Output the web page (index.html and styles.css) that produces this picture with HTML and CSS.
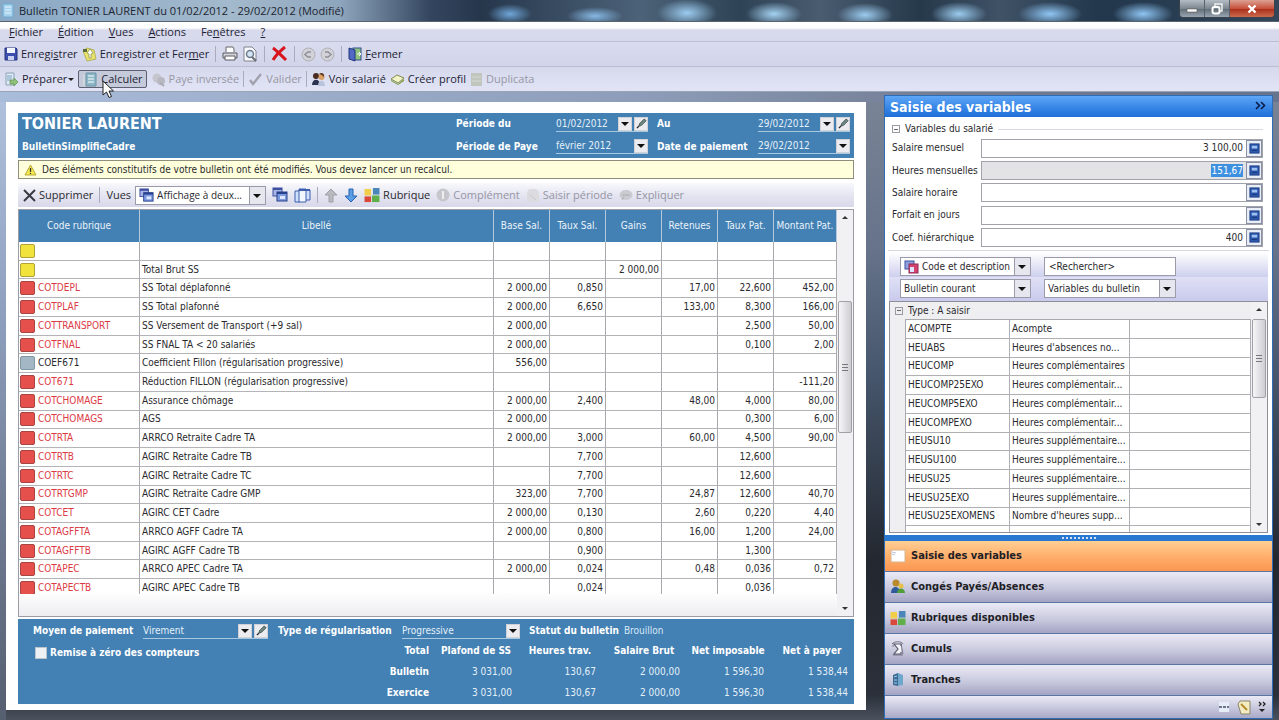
FILE: index.html
```html
<!DOCTYPE html>
<html lang="fr">
<head>
<meta charset="UTF-8">
<meta name="viewport" content="width=device-width, initial-scale=1.0">
<title>Bulletin TONIER LAURENT</title>
<link rel="stylesheet" href="styles.css">
</head>
<body>

<!-- shared icons -->
<svg class="sprite" width="0" height="0">
  <symbol id="i-calc" viewBox="0 0 12 12">
    <rect x="1" y="1" width="10" height="10" fill="#2c58ae" stroke="#1c3c84"/>
    <rect x="3" y="3" width="6" height="3" fill="#9fc1f2"/>
    <path d="M3 8h6" stroke="#16336f"/>
  </symbol>
  <symbol id="i-pencil" viewBox="0 0 12 12">
    <path d="M3 9l1-3 5-5 2 2-5 5z" fill="#6f8a80" stroke="#2c3a3a" stroke-width=".8"/>
    <path d="M1 11l2-2" stroke="#222" stroke-width="1.4"/>
  </symbol>
  <symbol id="i-windows" viewBox="0 0 16 16">
    <rect x="1" y="1" width="9" height="8" fill="#a9b6e8" stroke="#3f4f9f"/>
    <path d="M1 2h9" stroke="#3f4f9f" stroke-width="2"/>
    <rect x="5" y="5" width="10" height="9" fill="#7d9ae0" stroke="#27408c"/>
    <path d="M5 6h10" stroke="#27408c" stroke-width="2"/>
    <rect x="8" y="9" width="5" height="3" fill="#dfe8ff"/>
  </symbol>
  <symbol id="i-rubrique" viewBox="0 0 16 16">
    <rect x="0" y="1" width="7" height="7" fill="#f2cf4a"/>
    <rect x="9" y="0" width="7" height="7" fill="#4a86b8"/>
    <rect x="0" y="9" width="7" height="6" fill="#d9483b"/>
    <rect x="8" y="8" width="8" height="7" fill="#5fb04c"/>
  </symbol>
</svg>

<header class="titlebar">
  <svg width="14" height="16" viewBox="0 0 14 16"><rect x="1" y="1" width="10" height="13" rx="1" fill="#a5d2ee" stroke="#6fa9cf"/><path d="M3 4h6M3 7h6M3 10h6" stroke="#e9f6ff"/></svg>
  <h1>Bulletin TONIER LAURENT du 01/02/2012 - 29/02/2012 (Modifié)</h1>
  <div class="window-buttons">
    <button aria-label="Réduire"><svg width="12" height="10" viewBox="0 0 12 10"><rect x="1" y="5" width="10" height="3" fill="#fff" stroke="#555" stroke-width=".6"/></svg></button>
    <button aria-label="Restaurer"><svg width="12" height="12" viewBox="0 0 12 12"><path d="M4 3V1h7v7H9" fill="none" stroke="#eee" stroke-width="1.5"/><rect x="1.500" y="4" width="7" height="6.500" rx="2" fill="none" stroke="#fff" stroke-width="2"/></svg></button>
    <button class="close" aria-label="Fermer la fenêtre"><svg width="10" height="10" viewBox="0 0 10 10"><path d="M1.500 1.500l7 7M8.500 1.500l-7 7" stroke="#fff" stroke-width="2.400"/></svg></button>
  </div>
</header>

<nav class="menubar">
  <button><u>F</u>ichier</button>
  <button><u>É</u>dition</button>
  <button><u>V</u>ues</button>
  <button><u>A</u>ctions</button>
  <button>Fe<u>n</u>êtres</button>
  <button><u>?</u></button>
</nav>

<div class="toolbar toolbar-main">
  <button><svg width="14" height="14" viewBox="0 0 14 14"><path d="M1 1h11l1 1v11H1z" fill="#3c4fae" stroke="#25337c"/><rect x="3" y="1" width="8" height="5" fill="#f3f5ff"/><rect x="4" y="9" width="6" height="4" fill="#c9d1ee"/></svg><span>Enregi<u>s</u>trer</span></button>
  <button><svg width="15" height="15" viewBox="0 0 15 15"><path d="M1 4l4-3 7 2 2 9-9 2z" fill="#e9e36d" stroke="#b6b457"/><path d="M5 6l3-4 3 4-2 1v4H7V7z" fill="#fff" stroke="#7d8a4a" stroke-width=".7"/><path d="M1 2h4v3H1z" fill="#5c6a3a"/></svg><span>Enregistrer et Fer<u>m</u>er</span></button>
  <i class="sep"></i>
  <button aria-label="Imprimer"><svg width="16" height="16" viewBox="0 0 16 16"><path d="M4 6V1h7l1 2v3" fill="#fff" stroke="#666"/><path d="M1 7h14v5H1z" fill="#d5d5da" stroke="#5b5b63"/><path d="M3 10h10v4H3z" fill="#fff" stroke="#5b5b63"/></svg></button>
  <button aria-label="Aperçu"><svg width="16" height="16" viewBox="0 0 16 16"><path d="M2 1h8l4 4v10H2z" fill="#fbfbff" stroke="#82828e"/><circle cx="8" cy="8" r="3.500" fill="#d3e4f2" stroke="#6d7d8e" stroke-width="1.500"/><path d="M10 11l4 4" stroke="#6d6d78" stroke-width="2"/></svg></button>
  <i class="sep"></i>
  <button aria-label="Supprimer le bulletin"><svg width="17" height="16" viewBox="0 0 17 16"><path d="M2 2c4 3 8 7 13 12M14 1C9 5 5 9 2 14" fill="none" stroke="#d8141c" stroke-width="3"/></svg></button>
  <i class="sep"></i>
  <button disabled aria-label="Précédent"><svg width="15" height="15" viewBox="0 0 15 15"><circle cx="7.500" cy="7.500" r="6.500" fill="#d2d2d8" stroke="#b0b0b8"/><path d="M10 5H7L4 7.500 7 10h3" fill="none" stroke="#8e8e98" stroke-width="1.500"/></svg></button>
  <button disabled aria-label="Suivant"><svg width="15" height="15" viewBox="0 0 15 15"><circle cx="7.500" cy="7.500" r="6.500" fill="#d2d2d8" stroke="#b0b0b8"/><path d="M5 5h3l3 2.500L8 10H5" fill="none" stroke="#8e8e98" stroke-width="1.500"/></svg></button>
  <i class="sep"></i>
  <button><svg width="14" height="15" viewBox="0 0 14 15"><rect x="5" y="1" width="8" height="12" fill="#8fc27d" stroke="#2f4f8f"/><path d="M1 1l6 2v11l-6-2z" fill="#5169c4" stroke="#24357f"/><path d="M9 7h4l-2-2M13 7l-2 2" stroke="#fff" fill="none"/></svg><span><u>F</u>ermer</span></button>
</div>

<div class="toolbar toolbar-actions">
  <button><svg width="15" height="15" viewBox="0 0 15 15"><path d="M2 1h8v12H2z" fill="#dfe9f3" stroke="#8aa2b4"/><path d="M3 4h5M3 6h5M3 8h4" stroke="#7fa4c4"/><path d="M6 8h4V6l4 4-4 4v-2H6z" fill="#8fc17a" stroke="#5d9350" stroke-width=".7"/></svg>Préparer<span class="caret"></span></button>
  <button class="pressed"><svg width="16" height="15" viewBox="0 0 16 15"><path d="M1 3l2-1v12l-2-1z" fill="#cfd6de"/><path d="M4 1h10v13H4z" fill="#8fb6c6" stroke="#6b94a8"/><path d="M6 4h6M6 7h6M6 10h6" stroke="#d6eaf0" stroke-width="1.500"/></svg>Calculer</button>
  <button disabled><svg width="15" height="15" viewBox="0 0 15 15"><circle cx="6" cy="6" r="4.500" fill="#c5c5ce"/><circle cx="10" cy="9" r="4" fill="#b8b8c2"/><path d="M9 11l4 3" stroke="#aaaab4" stroke-width="2"/></svg>Paye inversée</button>
  <i class="sep"></i>
  <button disabled><svg width="15" height="14" viewBox="0 0 15 14"><path d="M2 8l3 4 8-10" fill="none" stroke="#a2a2ae" stroke-width="2.400"/></svg>Valider</button>
  <i class="sep"></i>
  <button><svg width="15" height="15" viewBox="0 0 15 15"><circle cx="5" cy="4" r="3" fill="#4b2a20"/><path d="M1 13c0-7 8-7 8 0z" fill="#2b3350"/><circle cx="10.500" cy="5" r="3" fill="#d9a066"/><path d="M8 2c2-2 6-1 5 3l-2-2z" fill="#5c3418"/><path d="M7 14c0-7 7-7 7 0z" fill="#b9c4dc"/></svg>Voir salarié</button>
  <button><svg width="15" height="13" viewBox="0 0 15 13"><path d="M1 6l6-4 7 3-6 5z" fill="#f2f3c8" stroke="#7f8a4c"/><path d="M1 7l7 4 6-5v2l-6 4-7-4z" fill="#7f9a42"/></svg>Créer profil</button>
  <button disabled><svg width="13" height="15" viewBox="0 0 13 15"><rect x="1" y="1" width="11" height="13" fill="#c0c6be"/><path d="M2 5h9M2 9h9" stroke="#d4dad2"/></svg>Duplicata</button>
</div>

<svg class="cursor" width="12" height="19" viewBox="0 0 12 19"><path d="M1 1v14l3.500-3 2.500 5.500 2.500-1L7 11h4.500z" fill="#fff" stroke="#222"/></svg>

<div class="workspace">
  <main class="bulletin">
    <section class="employee">
      <div>
        <h2>TONIER LAURENT</h2>
        <p>BulletinSimplifieCadre</p>
      </div>
      <div class="dates">
        <label for="du">Période du</label>
        <span class="field"><input id="du" value="01/02/2012"><button class="drop" aria-label="Choisir"></button><button class="edit" aria-label="Modifier"><svg width="11" height="11"><use href="#i-pencil"/></svg></button></span>
        <label for="au">Au</label>
        <span class="field"><input id="au" value="29/02/2012"><button class="drop" aria-label="Choisir"></button><button class="edit" aria-label="Modifier"><svg width="11" height="11"><use href="#i-pencil"/></svg></button></span>
        <label for="paye">Période de Paye</label>
        <span class="field"><input id="paye" value="février 2012"><button class="drop" aria-label="Choisir"></button></span>
        <label for="paiement">Date de paiement</label>
        <span class="field"><input id="paiement" value="29/02/2012"><button class="drop" aria-label="Choisir"></button></span>
      </div>
    </section>

    <p class="warning"><svg width="13" height="12" viewBox="0 0 13 12"><path d="M6.500 1L12 11H1z" fill="#f5e94c" stroke="#b8a93a"/><path d="M6.500 4v4M6.500 9v1" stroke="#333" stroke-width="1.300"/></svg>Des éléments constitutifs de votre bulletin ont été modifiés. Vous devez lancer un recalcul.</p>

    <div class="gridbar">
      <button><svg width="13" height="13" viewBox="0 0 13 13"><path d="M1 1l11 11M12 1L1 12" stroke="#3a3a44" stroke-width="2"/></svg>Supprimer</button>
      <i class="sep"></i>
      <label for="vue">Vues</label>
      <span class="combo combo-icon combo-view"><svg width="15" height="15"><use href="#i-windows"/></svg><select id="vue"><option>Affichage à deux...</option></select></span>
      <button aria-label="Fenêtres"><svg width="16" height="16"><use href="#i-windows"/></svg></button>
      <button aria-label="Colonnes"><svg width="17" height="15" viewBox="0 0 17 15"><path d="M1 3h5v11H1zM11 2h5v10h-5z" fill="#cfe0fa" stroke="#3f5fae"/><path d="M5 1h7v13H5z" fill="#f2f7ff" stroke="#3f5fae"/><path d="M5 2h11" stroke="#3f5fae" stroke-width="2"/></svg></button>
      <i class="sep"></i>
      <button disabled aria-label="Monter"><svg width="14" height="15" viewBox="0 0 14 15"><path d="M7 1l6 6H9v7H5V7H1z" fill="#b9b9c0" stroke="#a0a0a8"/></svg></button>
      <button aria-label="Descendre"><svg width="14" height="15" viewBox="0 0 14 15"><path d="M7 14L1 8h4V1h4v7h4z" fill="#5a9fe6" stroke="#2763b0"/></svg></button>
      <button><svg width="16" height="15"><use href="#i-rubrique"/></svg>Rubrique</button>
      <button disabled><svg width="14" height="14" viewBox="0 0 14 14"><circle cx="7" cy="7" r="6.500" fill="#c6c6cc"/><path d="M7 3v8" stroke="#eee" stroke-width="2"/></svg>Complément</button>
      <button disabled><svg width="14" height="15" viewBox="0 0 14 15"><path d="M3 1h7l3 3v10H1V4z" fill="#dcdce0"/><path d="M4 7l6 5" stroke="#c8c8d0"/></svg>Saisir période</button>
      <button disabled><svg width="14" height="13" viewBox="0 0 14 13"><ellipse cx="7" cy="6" rx="6.500" ry="5" fill="#cacad0"/><path d="M3 11l2-3M3 6h8" stroke="#aeaeb6"/></svg>Expliquer</button>
    </div>

    <div class="grid">
      <div class="grid-body">
        <div class="rows">
          <table class="rubriques">
            <colgroup><col class="c-code"><col><col class="c-num"><col class="c-num"><col class="c-num"><col class="c-num"><col class="c-num"><col class="c-last"></colgroup>
            <thead>
              <tr><th>Code rubrique</th><th>Libellé</th><th>Base Sal.</th><th>Taux Sal.</th><th>Gains</th><th>Retenues</th><th>Taux Pat.</th><th>Montant Pat.</th></tr>
            </thead>
            <tbody>
              <tr class="yellow"><td></td><td></td><td></td><td></td><td></td><td></td><td></td><td></td></tr>
              <tr class="yellow"><td></td><td>Total Brut SS</td><td></td><td></td><td>2 000,00</td><td></td><td></td><td></td></tr>
              <tr><td>COTDEPL</td><td>SS Total déplafonné</td><td>2 000,00</td><td>0,850</td><td></td><td>17,00</td><td>22,600</td><td>452,00</td></tr>
              <tr><td>COTPLAF</td><td>SS Total plafonné</td><td>2 000,00</td><td>6,650</td><td></td><td>133,00</td><td>8,300</td><td>166,00</td></tr>
              <tr><td>COTTRANSPORT</td><td>SS Versement de Transport (+9 sal)</td><td>2 000,00</td><td></td><td></td><td></td><td>2,500</td><td>50,00</td></tr>
              <tr><td>COTFNAL</td><td>SS FNAL TA &lt; 20 salariés</td><td>2 000,00</td><td></td><td></td><td></td><td>0,100</td><td>2,00</td></tr>
              <tr class="gray"><td>COEF671</td><td>Coefficient Fillon (régularisation progressive)</td><td>556,00</td><td></td><td></td><td></td><td></td><td></td></tr>
              <tr><td>COT671</td><td>Réduction FILLON (régularisation progressive)</td><td></td><td></td><td></td><td></td><td></td><td>-111,20</td></tr>
              <tr><td>COTCHOMAGE</td><td>Assurance chômage</td><td>2 000,00</td><td>2,400</td><td></td><td>48,00</td><td>4,000</td><td>80,00</td></tr>
              <tr><td>COTCHOMAGS</td><td>AGS</td><td>2 000,00</td><td></td><td></td><td></td><td>0,300</td><td>6,00</td></tr>
              <tr><td>COTRTA</td><td>ARRCO Retraite Cadre TA</td><td>2 000,00</td><td>3,000</td><td></td><td>60,00</td><td>4,500</td><td>90,00</td></tr>
              <tr><td>COTRTB</td><td>AGIRC Retraite Cadre TB</td><td></td><td>7,700</td><td></td><td></td><td>12,600</td><td></td></tr>
              <tr><td>COTRTC</td><td>AGIRC Retraite Cadre TC</td><td></td><td>7,700</td><td></td><td></td><td>12,600</td><td></td></tr>
              <tr><td>COTRTGMP</td><td>AGIRC Retraite Cadre GMP</td><td>323,00</td><td>7,700</td><td></td><td>24,87</td><td>12,600</td><td>40,70</td></tr>
              <tr><td>COTCET</td><td>AGIRC CET Cadre</td><td>2 000,00</td><td>0,130</td><td></td><td>2,60</td><td>0,220</td><td>4,40</td></tr>
              <tr><td>COTAGFFTA</td><td>ARRCO AGFF Cadre TA</td><td>2 000,00</td><td>0,800</td><td></td><td>16,00</td><td>1,200</td><td>24,00</td></tr>
              <tr><td>COTAGFFTB</td><td>AGIRC AGFF Cadre TB</td><td></td><td>0,900</td><td></td><td></td><td>1,300</td><td></td></tr>
              <tr><td>COTAPEC</td><td>ARRCO APEC Cadre TA</td><td>2 000,00</td><td>0,024</td><td></td><td>0,48</td><td>0,036</td><td>0,72</td></tr>
              <tr><td>COTAPECTB</td><td>AGIRC APEC Cadre TB</td><td></td><td>0,024</td><td></td><td></td><td>0,036</td><td></td></tr>
            </tbody>
          </table>
        </div>
      </div>
      <div class="scrollbar scroll-main"><i class="up"></i><i class="thumb"></i><i class="down"></i></div>
    </div>

    <footer class="summary">
      <div class="options">
        <label for="moyen">Moyen de paiement</label>
        <span class="field f-moyen"><input id="moyen" value="Virement"><button class="drop" aria-label="Choisir"></button><button class="edit" aria-label="Modifier"><svg width="11" height="11"><use href="#i-pencil"/></svg></button></span>
        <label for="regul">Type de régularisation</label>
        <span class="field f-regul"><input id="regul" value="Progressive"><button class="drop" aria-label="Choisir"></button></span>
        <b>Statut du bulletin</b>
        <span class="status">Brouillon</span>
      </div>
      <div class="totals-row">
        <label class="reset"><input type="checkbox">Remise à zéro des compteurs</label>
        <table class="totals">
          <tr><th>Total</th><th>Plafond de SS</th><th>Heures trav.</th><th>Salaire Brut</th><th>Net imposable</th><th>Net à payer</th></tr>
          <tr><th>Bulletin</th><td>3 031,00</td><td>130,67</td><td>2 000,00</td><td>1 596,30</td><td>1 538,44</td></tr>
          <tr><th>Exercice</th><td>3 031,00</td><td>130,67</td><td>2 000,00</td><td>1 596,30</td><td>1 538,44</td></tr>
        </table>
      </div>
    </footer>
  </main>

  <aside class="panel">
    <header class="panel-head">
      <h2>Saisie des variables</h2>
      <button aria-label="Replier"><svg width="11" height="9" viewBox="0 0 11 9"><path d="M1 1l3.500 3.500L1 8M6 1l3.500 3.500L6 8" fill="none" stroke="#0b1d4a" stroke-width="1.600"/></svg></button>
    </header>

    <section class="employee-vars">
      <h3><i class="minus"></i>Variables du salarié</h3>
      <div class="var-list">
        <label for="v1">Salaire mensuel</label><span class="var"><input id="v1" value="3 100,00"><button aria-label="Calculatrice"><svg width="11" height="11"><use href="#i-calc"/></svg></button></span>
        <label for="v2">Heures mensuelles</label><span class="var active"><span class="box"><input id="v2" value="151,67"></span><button aria-label="Calculatrice"><svg width="11" height="11"><use href="#i-calc"/></svg></button></span>
        <label for="v3">Salaire horaire</label><span class="var"><input id="v3"><button aria-label="Calculatrice"><svg width="11" height="11"><use href="#i-calc"/></svg></button></span>
        <label for="v4">Forfait en jours</label><span class="var"><input id="v4"><button aria-label="Calculatrice"><svg width="11" height="11"><use href="#i-calc"/></svg></button></span>
        <label for="v5">Coef. hiérarchique</label><span class="var"><input id="v5" value="400"><button aria-label="Calculatrice"><svg width="11" height="11"><use href="#i-calc"/></svg></button></span>
      </div>
    </section>

    <div class="filters">
      <span class="combo combo-icon"><svg width="15" height="14" viewBox="0 0 15 14"><rect x="1" y="1" width="9" height="8" fill="#8ea2e0" stroke="#3f4f9f"/><rect x="5" y="4" width="9" height="9" fill="#d6446c" stroke="#8a2a5c"/><rect x="6" y="7" width="4" height="5" fill="#dfe4ff"/></svg><select aria-label="Affichage"><option>Code et description</option></select></span>
      <input class="search" aria-label="Rechercher" value="&lt;Rechercher&gt;">
      <span class="combo"><select aria-label="Portée"><option>Bulletin courant</option></select></span>
      <span class="combo"><select aria-label="Source"><option>Variables du bulletin</option></select></span>
    </div>

    <div class="var-grid">
      <div class="var-grid-body">
        <h3><i class="minus"></i>Type : A saisir</h3>
        <div class="var-rows">
          <table>
            <colgroup><col class="v-code"><col class="v-name"><col></colgroup>
            <tr><td>ACOMPTE</td><td>Acompte</td><td></td></tr>
            <tr><td>HEUABS</td><td>Heures d'absences no...</td><td></td></tr>
            <tr><td>HEUCOMP</td><td>Heures complémentaires</td><td></td></tr>
            <tr><td>HEUCOMP25EXO</td><td>Heures complémentair...</td><td></td></tr>
            <tr><td>HEUCOMP5EXO</td><td>Heures complémentair...</td><td></td></tr>
            <tr><td>HEUCOMPEXO</td><td>Heures complémentair...</td><td></td></tr>
            <tr><td>HEUSU10</td><td>Heures supplémentaire...</td><td></td></tr>
            <tr><td>HEUSU100</td><td>Heures supplémentaire...</td><td></td></tr>
            <tr><td>HEUSU25</td><td>Heures supplémentaire...</td><td></td></tr>
            <tr><td>HEUSU25EXO</td><td>Heures supplémentaire...</td><td></td></tr>
            <tr><td>HEUSU25EXOMENS</td><td>Nombre d'heures supp...</td><td></td></tr>
            <tr><td></td><td></td><td></td></tr>
          </table>
        </div>
      </div>
      <div class="scrollbar scroll-side"><i class="up"></i><i class="thumb"></i><i class="down"></i></div>
    </div>

    <div class="splitter"><i></i></div>

    <nav class="outlook">
      <button class="current"><svg width="16" height="15" viewBox="0 0 16 15"><rect x="1" y="1" width="14" height="12" fill="#fff" stroke="#d9b48c"/><path d="M2 3l4 1M2 5l3 1" stroke="#b9c4dc"/></svg>Saisie des variables</button>
      <button><svg width="16" height="16" viewBox="0 0 16 16"><circle cx="6" cy="4" r="3.500" fill="#b98a2c"/><path d="M1 14c0-8 9-8 9 0z" fill="#2f5a9c"/><circle cx="11" cy="7" r="2.500" fill="#e7c04a"/><path d="M7 14c0-6 8-6 8 0z" fill="#4f9e3a"/></svg>Congés Payés/Absences</button>
      <button><svg width="16" height="15"><use href="#i-rubrique"/></svg>Rubriques disponibles</button>
      <button><svg width="16" height="16" viewBox="0 0 16 16"><path d="M2 3c2-3 10-3 11 0M3 4v2M11 3l2 10M3 14h10" fill="none" stroke="#77778a"/><path d="M11 5V3H4l4 5-4 5h7v-2" fill="#f4f4fa" stroke="#5a5a6c" stroke-width="1.200"/></svg>Cumuls</button>
      <button><svg width="16" height="16" viewBox="0 0 16 16"><path d="M3 3l5-2v13l-5-1z" fill="#3b6a94"/><path d="M8 1l5 2v10l-5 1z" fill="#6fa6cc"/><path d="M4 5l3-1M4 8h3M4 11h3" stroke="#a9cfe8"/></svg>Tranches</button>
      <div class="overflow">
        <svg width="12" height="12" viewBox="0 0 12 12"><rect x="1" y="1" width="10" height="10" fill="#e6ecf8"/><path d="M1 6h10" stroke="#44506a" stroke-width="1.500" stroke-dasharray="3 1"/></svg>
        <svg width="14" height="15" viewBox="0 0 14 15"><path d="M3 1h10v13H4L1 4z" fill="#f3ecc0" stroke="#8a8468"/><path d="M4 4l6 6" stroke="#b48c2c" stroke-width="2"/></svg>
        <button aria-label="Configurer"><svg width="9" height="12" viewBox="0 0 9 12"><path d="M1 1l2 2-2 2M5 1l2 2-2 2" fill="none" stroke="#222" stroke-width="1.300"/><path d="M1 8h6l-3 3z" fill="#222"/></svg></button>
      </div>
    </nav>
  </aside>
</div>

</body>
</html>
```
FILE: styles.css
```css
*,
*::before,
*::after {
  box-sizing: border-box;
}

body {
  margin: 0;
  height: 100vh;
  display: flex;
  flex-direction: column;
  overflow: hidden;
  font-family: "DejaVu Sans Condensed", "DejaVu Sans", sans-serif;
  font-size: 10px;
  line-height: 14px;
  color: #2a2a2e;
  background: #2b303c;
}

h1, h2, h3, p {
  margin: 0;
}

button, input, select {
  margin: 0;
  padding: 0;
  border: 0;
  border-radius: 0;
  background: none;
  font: inherit;
  color: inherit;
  min-width: 0;
}

svg {
  flex: none;
}

.sprite {
  position: absolute;
}

/* Window title */
.titlebar {
  flex: none;
  height: 22px;
  display: flex;
  align-items: center;
  gap: 3px;
  padding-left: 2px;
  border-bottom: 1px solid #59636e;
  background:
    radial-gradient(ellipse 22px 10px at 510px 14px, #6fa6d8, transparent),
    radial-gradient(ellipse 28px 9px at 595px 16px, #86b8e4, transparent),
    radial-gradient(ellipse 30px 14px at 687px 13px, #9cccf0, transparent),
    radial-gradient(ellipse 28px 12px at 774px 14px, #a4d2f2, transparent),
    radial-gradient(ellipse 28px 12px at 865px 15px, #9cccf0, transparent),
    radial-gradient(ellipse 28px 12px at 959px 14px, #9cccf0, transparent),
    radial-gradient(ellipse 32px 12px at 1050px 14px, #8fc6f4, transparent),
    radial-gradient(ellipse 30px 12px at 1143px 14px, #8fc6f4, transparent),
    linear-gradient(90deg, #8aa9c6 0, #a3b9cc 230px, #8ea6bd 340px, #34465f 430px, #26374c 480px, #4c6278 640px, #2e4355 740px, #4a5c70 820px, #26394b 920px, #3f5266 1000px, #22374c 1100px, #33465a 1279px);
}

.titlebar h1 {
  flex: 1;
  font: 11px/16px "Open Sans", "Noto Sans", sans-serif;
  color: #1c2430;
}

.window-buttons {
  align-self: flex-start;
  display: flex;
  margin-right: 4px;
  border: 1px solid #39434e;
  border-top: 0;
  border-radius: 0 0 4px 4px;
  overflow: hidden;
}

.window-buttons button {
  width: 25px;
  height: 17px;
  display: flex;
  align-items: center;
  justify-content: center;
  border-right: 1px solid #59616a;
  background: linear-gradient(#b4bcc4, #7d8790 50%, #5f6a74 51%, #99a6b2);
}

.window-buttons .close {
  width: 44px;
  border: 0;
  background: linear-gradient(#dba192, #c8503c 50%, #a82c18 51%, #cc6a4c);
}

/* Menus and toolbars */
.menubar,
.toolbar {
  flex: none;
  display: flex;
  align-items: center;
  font: 11px/16px "Open Sans", "Noto Sans", sans-serif;
  color: #1e1e34;
  border-bottom: 1px solid #bcbfd4;
}

.menubar {
  height: 20px;
  gap: 15px;
  padding-left: 9px;
  background: linear-gradient(#fff 0, #fdfdff 6px, #d8daec 8px, #d6d8ec);
}

.toolbar {
  gap: 4px;
  padding-left: 4px;
  background: linear-gradient(#d9dcee, #d2d5ea);
}

.toolbar-main {
  height: 25px;
}

.toolbar-actions {
  height: 25px;
  background: linear-gradient(#d6d9ec, #e2e4f6);
  border-bottom-color: #9aa4b8;
}

.toolbar-main .sep {
  margin: 0 2px;
}

.toolbar button,
.gridbar button {
  display: flex;
  align-items: center;
  gap: 3px;
  white-space: nowrap;
}

.toolbar button:disabled,
.gridbar button:disabled {
  color: #9696a4;
}

.toolbar .pressed {
  height: 18px;
  padding: 0 3px;
  border: 1px solid #5c6070;
  border-radius: 2px;
  background: #c5cadb;
}

.caret {
  border: 3px solid transparent;
  border-top-color: #222;
  border-bottom: 0;
  margin-left: -2px;
}

.sep {
  flex: none;
  width: 1px;
  height: 16px;
  background: #a9abbe;
}

.cursor {
  position: absolute;
  left: 102px;
  top: 80px;
}

/* Work area */
.workspace {
  flex: 1;
  min-height: 0;
  display: flex;
  gap: 18px;
  padding: 3px 6px 1px;
  background:
    linear-gradient(90deg, #a9bcd9, #8d9db9 50%, #717b91 75%, #66748e) 0 0 / 100% 10px no-repeat,
    linear-gradient(#b0c2de, #8c9dbb 38%, #717d95 65%, #565f70) 0 0 / 6px 100% no-repeat,
    linear-gradient(#7a8496, #66738a 25%, #46566c 45%, #23272f 75%, #2b303a 96%, #4a525e);
}

.bulletin {
  flex: 1;
  min-width: 0;
  display: flex;
  flex-direction: column;
  margin: 7px 0 9px;
  padding: 11px 12px 6px;
  background: #fff;
}

.employee {
  display: flex;
  justify-content: space-between;
  height: 45px;
  padding: 0 4px;
  background: #4380b3;
  color: #fff;
}

.employee h2 {
  font-size: 16px;
  line-height: 21px;
}

.employee p {
  font-weight: bold;
  line-height: 25px;
}

.dates {
  display: grid;
  grid-template-columns: 100px 101px 101px 92px;
  align-items: center;
  font-weight: bold;
}

.field {
  display: flex;
  gap: 2px;
  height: 15px;
  border-bottom: 1px solid #a9c8e2;
  font-weight: normal;
}

.dates .field:nth-child(4n + 2) {
  margin-right: 9px;
}

.field input {
  flex: 1;
  width: 0;
  color: #e4f0fa;
}

.field button {
  width: 14px;
  height: 14px;
  display: flex;
  align-items: center;
  justify-content: center;
  background: #ececf0;
  border: 1px solid #d0d2d8;
}

.drop::after {
  content: "";
  border: 4px solid transparent;
  border-top-color: #111;
  border-bottom: 0;
}

.warning {
  display: flex;
  align-items: center;
  gap: 5px;
  height: 19px;
  margin-top: 2px;
  padding-left: 5px;
  border: 1px solid #8e8e7e;
  background: #ffffdc;
}

.gridbar {
  display: flex;
  align-items: center;
  gap: 6px;
  height: 24px;
  margin: 4px 0 2px;
  padding-left: 5px;
  font: 11px/16px "Open Sans", "Noto Sans", sans-serif;
  background: linear-gradient(#f8f8fc, #e2e2f0 60%, #d8d8ea);
}

.gridbar label {
  margin-right: -2px;
}

.combo {
  display: flex;
  align-items: center;
  height: 19px;
  border: 1px solid #9a9aa8;
  background: #fff;
}

.combo-icon {
  padding-left: 3px;
}

.combo select {
  flex: 1;
  width: 0;
  height: 17px;
  padding-left: 3px;
  appearance: none;
  background: url("data:image/svg+xml,%3Csvg xmlns='http://www.w3.org/2000/svg' width='16' height='17'%3E%3Crect width='16' height='17' fill='%23e6e6ee'/%3E%3Cpath d='M.5 0v17' stroke='%239a9aa8'/%3E%3Cpath d='M4 7h8l-4 4z' fill='%23111'/%3E%3C/svg%3E") right center no-repeat;
}

.combo-view {
  width: 131px;
  font-size: 10px;
}

/* Payslip lines */
.grid {
  flex: 1;
  min-height: 0;
  display: flex;
  border: 1px solid #9c9ca4;
}

.grid-body {
  flex: 1;
  min-width: 0;
  background: linear-gradient(#fff 94%, #ededf0);
}

.rows {
  height: 384px;
  overflow: hidden;
}

.rubriques {
  width: 100%;
  height: 388px;
  table-layout: fixed;
  border-collapse: separate;
  border-spacing: 0;
}

.c-code { width: 121px; }
.c-num { width: 56px; }
.c-last { width: 63px; }

.rubriques th {
  height: 32px;
  padding: 0;
  background: #4380b3;
  border-right: 1px solid #b5c9da;
  color: #eaf3fb;
  font-weight: normal;
  white-space: nowrap;
  overflow: hidden;
}

.rubriques td {
  padding: 0 2px;
  border-right: 1px solid #a9a9ad;
  border-bottom: 1px solid #b4b4b8;
  line-height: 14px;
  text-align: right;
  white-space: nowrap;
}

.rubriques td:nth-child(-n + 2) {
  text-align: left;
}

.rubriques td:first-child {
  color: #dc3a44;
}

.rubriques .gray td:first-child {
  color: inherit;
}

.rubriques td:first-child::before {
  content: "";
  display: inline-block;
  width: 15px;
  height: 14px;
  margin: 0 3px 0 -1px;
  vertical-align: top;
  border: 1px solid #a84442;
  border-radius: 2px;
  background: #e5504d;
}

.rubriques .yellow td:first-child::before {
  border-color: #b0a234;
  background: #f2e23c;
}

.rubriques .gray td:first-child::before {
  border-color: #8097a4;
  background: #a3b8c4;
}

.scrollbar {
  flex: none;
  width: 16px;
  display: flex;
  flex-direction: column;
  align-items: center;
  background: #f1f1f3;
}

.scrollbar .up,
.scrollbar .down {
  border: 3px solid transparent;
  margin: 6px 0;
}

.scrollbar .up {
  border-bottom-color: #333;
  border-top: 0;
}

.scrollbar .down {
  border-top-color: #333;
  border-bottom: 0;
  margin-top: auto;
}

.thumb {
  width: 14px;
  border: 1px solid #a0a0a6;
  border-radius: 2px;
  background:
    repeating-linear-gradient(#77777e 0 1px, transparent 1px 3px) center / 6px 7px no-repeat,
    linear-gradient(90deg, #f6f6f8, #cdcdd2);
}

.scroll-main .thumb {
  height: 132px;
  margin-top: 76px;
}

.scroll-side .thumb {
  height: 79px;
  margin-top: 2px;
}

/* Totals */
.summary {
  height: 85px;
  margin-top: 2px;
  padding-top: 3px;
  background: #4380b3;
  color: #fff;
  font-weight: bold;
}

.options {
  display: flex;
  align-items: center;
  height: 18px;
  padding-left: 15px;
  white-space: nowrap;
}

.options label {
  width: 124px;
}

.options label:first-child {
  width: 110px;
}

.f-moyen {
  width: 125px;
  margin-right: 10px;
}

.f-regul {
  width: 118px;
  margin-right: 9px;
}

.status {
  margin-left: 5px;
  font-weight: normal;
  color: #d6e8f8;
}

.totals-row {
  display: flex;
  justify-content: space-between;
  align-items: flex-start;
}

.reset {
  display: flex;
  align-items: center;
  gap: 3px;
  padding: 6px 0 0 17px;
}

.reset input {
  appearance: none;
  width: 12px;
  height: 12px;
  border: 1px solid #b8c4ce;
  background: #eef1f4;
}

.totals {
  border-collapse: collapse;
  table-layout: fixed;
  width: 476px;
}

.totals th,
.totals td {
  width: 84px;
  height: 21px;
  padding: 0;
  text-align: center;
  white-space: nowrap;
}

.totals th:first-child {
  width: 56px;
  padding-right: 5px;
  text-align: right;
}

.totals td {
  padding-right: 6px;
  text-align: right;
  font-weight: normal;
  color: #e4f0fa;
}

/* Right panel */
.panel {
  flex: none;
  width: 389px;
  display: flex;
  flex-direction: column;
  border: 1px solid #2f6cb8;
  background: #fff;
}

.panel-head {
  flex: none;
  height: 21px;
  display: flex;
  align-items: center;
  justify-content: space-between;
  padding: 0 6px 0 5px;
  background: linear-gradient(#5ea6f6, #3b89e8 50%, #1d6ed6);
}

.panel-head h2 {
  font-size: 14px;
  line-height: 20px;
  color: #fff;
}

.panel h3 {
  display: flex;
  align-items: center;
  gap: 5px;
  font-size: 10px;
  font-weight: normal;
}

.minus {
  width: 8px;
  height: 8px;
  border: 1px solid #9a9aa4;
  background: linear-gradient(#666, #666) center / 4px 1px no-repeat;
}

.employee-vars {
  margin: 5px 3px 0;
  padding: 0 6px 0 4px;
  border-bottom: 1px solid #d8d8de;
}

.employee-vars h3::after {
  content: "";
  flex: 1;
  height: 1px;
  background: #d8d8de;
}

.var-list {
  display: grid;
  grid-template-columns: 89px 1fr;
  grid-template-rows: repeat(5, 1fr);
  align-items: center;
  height: 112px;
  margin: 1px 0;
}

.var {
  display: flex;
  height: 19px;
  border: 1px solid #a2a2aa;
  background: #fff;
}

.var > input,
.box {
  flex: 1;
  width: 0;
  padding-right: 3px;
}

.var input {
  text-align: right;
}

.var button {
  width: 16px;
  display: flex;
  align-items: center;
  justify-content: center;
  border: 1px solid #8a90a4;
  background: #e9edf6;
}

.active {
  background: #e3e3e5;
}

.box {
  display: flex;
  justify-content: flex-end;
  align-items: center;
}

.box input {
  width: 32px;
  height: 13px;
  background: #3d8fdf;
  color: #fff;
}

.filters {
  display: grid;
  grid-template-columns: 131px 132px;
  grid-template-rows: 19px 19px;
  gap: 3px 13px;
  margin: 1px 4px 0;
  padding: 5px 11px 3px;
  background: linear-gradient(#fff, #d4d5f0 45%, #cfd0ee 50%, #dfe0f5 52%, #c9caec);
}

.search {
  padding-left: 4px;
  border: 1px solid #9a9aa8;
  background: #fff;
}

.var-grid {
  flex: 1;
  min-height: 0;
  display: flex;
  margin: 0 4px 2px;
  border: 1px solid #8f8f98;
}

.var-grid-body {
  flex: 1;
  min-width: 0;
  display: flex;
  flex-direction: column;
  background: #efeff1;
}

.var-grid h3 {
  flex: none;
  height: 17px;
  padding-left: 5px;
}

.var-rows {
  flex: 1;
  min-height: 0;
  margin-left: 15px;
  overflow: hidden;
}

.var-rows table {
  width: 100%;
  height: 226px;
  table-layout: fixed;
  border-spacing: 0;
  border-top: 1px solid #a9a9ad;
  border-left: 1px solid #a9a9ad;
  background: #fff;
}

.v-code { width: 104px; }
.v-name { width: 120px; }

.var-rows td {
  height: 15px;
  padding: 0 2px;
  border-right: 1px solid #b0b0b4;
  border-bottom: 1px solid #b0b0b4;
  white-space: nowrap;
}

.splitter {
  flex: none;
  height: 6px;
  display: flex;
  justify-content: center;
  align-items: center;
  background: #2878d2;
}

.splitter i {
  width: 34px;
  height: 2px;
  background: repeating-linear-gradient(90deg, #cfe2fa 0 2px, transparent 2px 4px);
}

.outlook button {
  display: flex;
  align-items: center;
}

.outlook > button {
  width: 100%;
  height: 31px;
  gap: 5px;
  padding-left: 5px;
  border-bottom: 1px solid #5c76a4;
  font-size: 11px;
  font-weight: bold;
  color: #1e1e26;
  background: linear-gradient(#eaeaf6, #c9c9de 55%, #a3a3c4);
}

.outlook .current {
  background: linear-gradient(#ffcf94, #ffb06c 50%, #fa9652);
}

.overflow {
  height: 22px;
  display: flex;
  align-items: center;
  justify-content: flex-end;
  gap: 7px;
  padding-right: 5px;
  background: linear-gradient(#eaeaf6, #a9a9c8);
}
```
